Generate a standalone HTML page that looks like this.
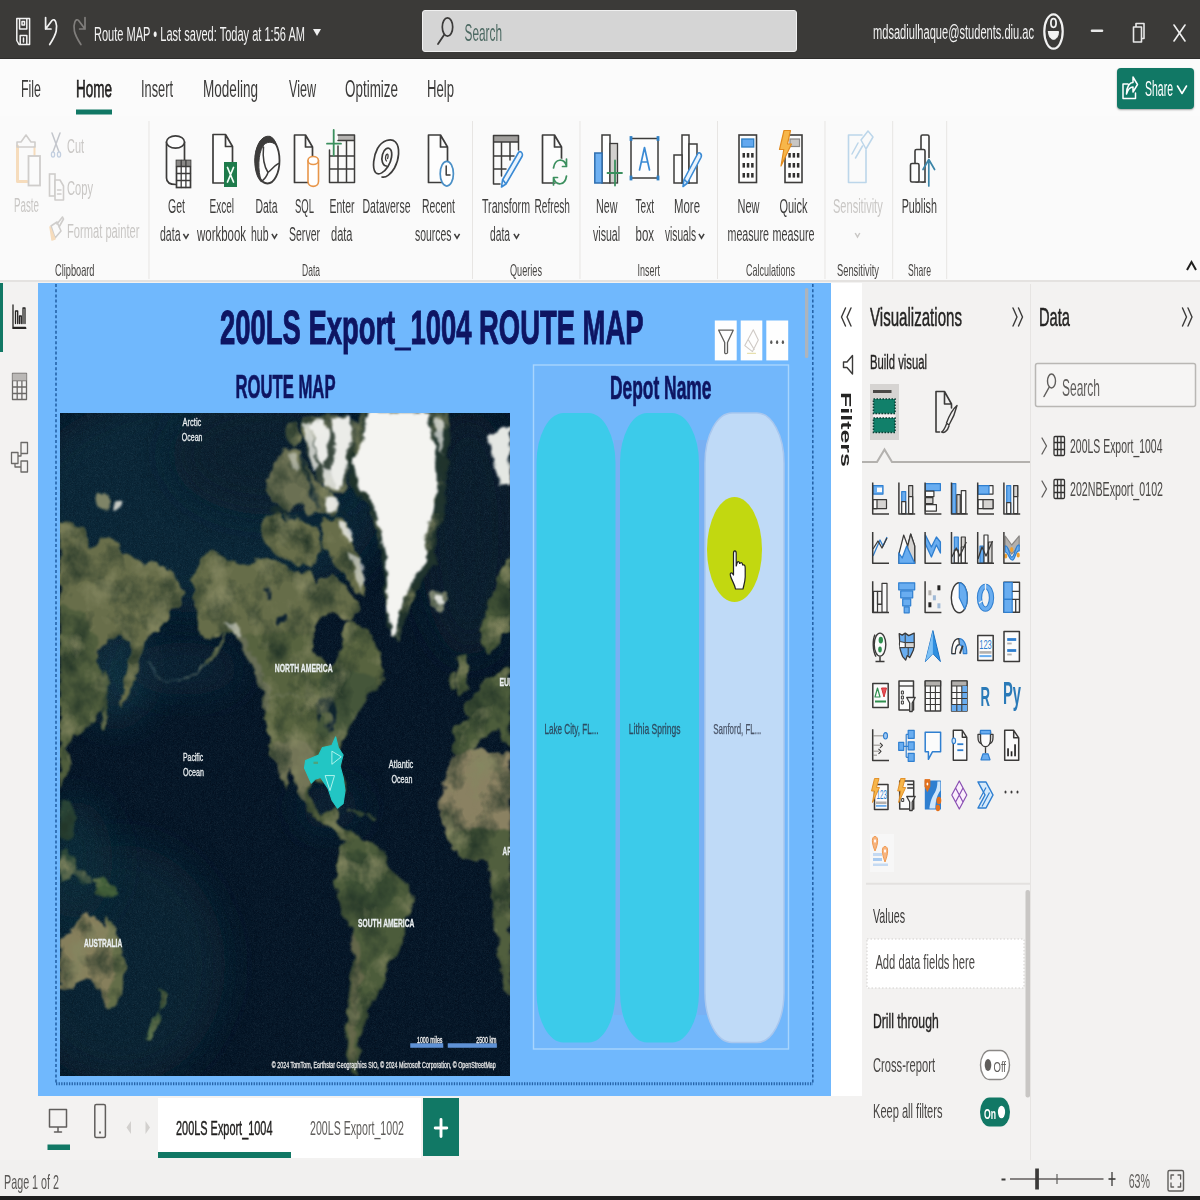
<!DOCTYPE html>
<html lang="en"><head><meta charset="utf-8"><title>Route MAP - Power BI Desktop</title>
<style>
html,body{margin:0;padding:0;}
body{width:1200px;height:1200px;overflow:hidden;position:relative;background:#f3f2f1;font-family:"Liberation Sans",sans-serif;}
.abs{position:absolute;}
#titlebar{left:0;top:0;width:1200px;height:59px;background:#3b3a38;border-bottom:1px solid #2e2d2c;box-sizing:border-box;}
#searchbox{left:422px;top:10px;width:373px;height:40px;background:#d5d5d5;border:1.5px solid #f0f0f0;border-radius:3px;box-sizing:content-box;}
#menurow{left:0;top:59px;width:1200px;height:57px;background:#fbfbfb;}
#ribbon{left:0;top:116px;width:1200px;height:164px;background:#fafafa;border-bottom:2.5px solid #e4e2e0;}
#share{left:1117px;top:67.5px;width:77px;height:41px;background:#117865;border-radius:4px;box-shadow:0 1px 2px rgba(0,0,0,.35);}
#rail{left:0;top:282.5px;width:38px;height:813px;background:#f3f2f1;}
#railsel{left:0;top:283px;width:2.6px;height:69px;background:#117865;}
#canvas{left:37.6px;top:282.5px;width:793.4px;height:813px;background:#70b8fd;}
#filters{left:831px;top:282.5px;width:31px;height:813px;background:#ffffff;}
#viz{left:862px;top:282.5px;width:168px;height:878px;background:#f3f2f1;}
#data{left:1031px;top:282.5px;width:169px;height:878px;background:#f3f2f1;}
#tabs{left:0;top:1095.5px;width:862px;height:65px;background:#f3f2f1;}
#tab1{left:157.5px;top:1097.5px;width:133.5px;height:60px;background:#ffffff;border-bottom:6.5px solid #117865;box-sizing:border-box;}
#tab2{left:291px;top:1097.5px;width:130px;height:60px;background:#ffffff;}
#addtab{left:422.5px;top:1098px;width:36.5px;height:58px;background:#117865;}
#status{left:0;top:1160px;width:1200px;height:36px;background:#f1f0ef;}
#bottomline{left:0;top:1196px;width:1200px;height:4px;background:#1f1f1f;}
#map{left:60px;top:413px;width:450px;height:663px;overflow:hidden;background:#06192a;}
svg text{font-family:"Liberation Sans",sans-serif;}
#overlay{left:0;top:0;}
</style></head>
<body>
<div id="titlebar" class="abs"></div>
<div id="searchbox" class="abs"></div>
<div id="menurow" class="abs"></div>
<div id="ribbon" class="abs"></div>
<div id="share" class="abs"></div>
<div id="rail" class="abs"></div>
<div id="railsel" class="abs"></div>
<div id="canvas" class="abs"></div>
<div id="map" class="abs">
<svg style="position:absolute;left:0;top:-3px" width="450" height="670" viewBox="0 0 1200 1787" preserveAspectRatio="none"><defs><filter id="b3" x="-2%" y="-2%" width="104%" height="104%" color-interpolation-filters="sRGB"><feTurbulence type="fractalNoise" baseFrequency="0.035 0.03" numOctaves="3" seed="11" result="w"/><feDisplacementMap in="SourceGraphic" in2="w" scale="26" xChannelSelector="R" yChannelSelector="G" result="dsp"/><feGaussianBlur in="dsp" stdDeviation="2.6" result="bl"/><feTurbulence type="fractalNoise" baseFrequency="0.013 0.011" numOctaves="4" seed="7" result="n"/><feColorMatrix in="n" type="matrix" values="0 0 0 0 0.13  0 0 0 0 0.20  0 0 0 0 0.15  2.2 0 0 0 -0.95" result="dk"/><feComposite in="dk" in2="bl" operator="in" result="dkl"/><feColorMatrix in="n" type="matrix" values="0 0 0 0 0.52  0 0 0 0 0.53  0 0 0 0 0.38  0 2.6 0 0 -1.35" result="lt"/><feComposite in="lt" in2="bl" operator="in" result="ltl"/><feMerge><feMergeNode in="bl"/><feMergeNode in="dkl"/><feMergeNode in="ltl"/></feMerge></filter><filter id="b2" x="-3%" y="-3%" width="106%" height="106%" color-interpolation-filters="sRGB"><feTurbulence type="fractalNoise" baseFrequency="0.04 0.035" numOctaves="3" seed="5" result="w"/><feDisplacementMap in="SourceGraphic" in2="w" scale="22" xChannelSelector="R" yChannelSelector="G" result="dsp"/><feGaussianBlur in="dsp" stdDeviation="2.5"/></filter><filter id="grain" x="0" y="0" width="100%" height="100%" color-interpolation-filters="sRGB"><feTurbulence type="fractalNoise" baseFrequency="0.7" numOctaves="2" seed="3"/><feColorMatrix type="matrix" values="0.3 0.3 0.3 0 -0.42  0.3 0.3 0.3 0 -0.35  0.3 0.3 0.3 0 -0.30  0 0 0 0 1"/></filter><filter id="b30" x="-40%" y="-40%" width="180%" height="180%"><feGaussianBlur stdDeviation="45"/></filter></defs><rect x="0" y="0" width="1200" height="1787" fill="#061729"/>
<ellipse cx="380" cy="240" rx="480" ry="300" fill="#112f3f" opacity="0.9" filter="url(#b30)"/>
<ellipse cx="560" cy="120" rx="260" ry="160" fill="#0a2232" opacity="0.9" filter="url(#b30)"/>
<ellipse cx="1090" cy="330" rx="130" ry="330" fill="#0a2233" opacity="0.9" filter="url(#b30)"/>
<ellipse cx="160" cy="1480" rx="280" ry="320" fill="#0e2b3a" opacity="0.85" filter="url(#b30)"/>
<ellipse cx="150" cy="700" rx="100" ry="130" fill="#163c4e" opacity="0.85" filter="url(#b30)"/>
<ellipse cx="330" cy="690" rx="150" ry="70" fill="#0e2b3c" opacity="0.8" filter="url(#b30)"/>
<ellipse cx="720" cy="1060" rx="80" ry="60" fill="#0e2b3c" opacity="0.9" filter="url(#b30)"/>
<ellipse cx="40" cy="1200" rx="100" ry="160" fill="#10333f" opacity="0.85" filter="url(#b30)"/>
<rect x="0" y="0" width="1200" height="1787" filter="url(#grain)" opacity="0.22"/>
<g filter="url(#b3)"><path d="M0 300 L30 300 L60 320 L70 360 L80 372 L110 345 L130 330 L150 350 L170 380 L200 395 L220 415 L250 405 L280 420 L300 440 L320 465 L330 490 L320 515 L300 530 L290 550 L280 570 L262 584 L235 598 L222 632 L206 700 L186 760 L170 792 L159 780 L174 720 L184 662 L186 612 L160 604 L130 612 L104 640 L98 670 L120 725 L116 790 L90 830 L55 860 L30 872 L16 900 L30 940 L16 975 L0 1010 Z" fill="#686e4a" /><path d="M0 520 L60 540 L100 610 L98 670 L120 725 L116 790 L90 830 L55 860 L30 872 L16 900 L30 940 L16 975 L0 1010 Z" fill="#4c5c3b" opacity="0.85"/><path d="M115 700 L128 698 L130 760 L122 850 L112 850 L118 770 Z" fill="#42533a" /><path d="M4 1040 L30 1050 L46 1085 L40 1130 L14 1150 L0 1140 Z" fill="#2a4638" /><path d="M98 222 L126 218 L136 244 L126 266 L104 262 Z" fill="#7f8467" /><path d="M360 430 L380 392 L400 375 L430 395 L470 410 L500 415 L530 398 L556 392 L600 418 L640 438 L665 430 L682 468 L702 452 L726 440 L760 470 L790 500 L800 540 L772 558 L744 546 L714 538 L690 552 L676 600 L672 628 L690 660 L722 680 L748 652 L752 604 L764 560 L800 578 L830 600 L850 650 L860 700 L856 732 L822 766 L800 800 L786 822 L766 860 L756 880 L750 900 L745 920 L750 950 L755 980 L760 1015 L755 1050 L745 1062 L735 1044 L726 1012 L704 994 L682 986 L670 996 L665 1026 L676 1060 L700 1076 L722 1070 L736 1062 L738 1086 L732 1102 L760 1120 L790 1130 L810 1150 L830 1170 L842 1200 L830 1206 L800 1176 L770 1152 L750 1140 L730 1122 L700 1102 L676 1082 L650 1052 L630 1002 L612 952 L604 1010 L590 980 L576 942 L560 900 L550 850 L545 800 L540 752 L520 700 L500 650 L466 602 L452 588 L432 596 L404 612 L376 600 L364 578 L370 550 L360 530 L350 500 L360 480 L350 452 Z" fill="#57633f" /><path d="M360 430 L380 392 L400 375 L430 395 L470 410 L500 415 L530 398 L556 392 L600 418 L640 438 L665 430 L682 468 L702 452 L726 440 L760 470 L790 500 L800 540 L772 558 L744 546 L714 538 L690 552 L676 600 L600 590 L520 600 L466 602 L452 588 L432 596 L404 612 L376 600 L364 578 L370 550 L360 530 L350 500 L360 480 L350 452 Z" fill="#686e4a" opacity="0.9"/><path d="M700 700 L760 690 L842 716 L852 740 L822 766 L800 800 L766 860 L745 900 L720 900 L684 860 L690 780 Z" fill="#42533a" opacity="0.85"/><path d="M562 890 L640 872 L682 902 L690 960 L664 1000 L650 1050 L630 1002 L612 952 L604 1000 L590 980 L576 942 Z" fill="#77775a" opacity="0.9"/><path d="M452 588 L466 602 L500 650 L520 700 L540 752 L545 800 L560 800 L556 740 L536 690 L512 640 L482 596 Z" fill="#6f7461" opacity="0.7"/><path d="M444 596 C424 650 360 726 300 726 C268 724 246 700 230 672" fill="none" stroke="#3a5560" stroke-width="5" stroke-linecap="round" opacity="0.75"/><path d="M444 596 C434 622 414 650 392 672" fill="none" stroke="#55634a" stroke-width="7" stroke-linecap="round"/><path d="M548 470 L562 466 L560 500 L548 510 Z" fill="#0a1f30" /><path d="M580 560 L602 548 L606 558 L584 580 Z" fill="#0a1f30" /><path d="M688 776 L706 762 L726 770 L732 800 L728 852 L716 858 L716 806 L700 800 L694 830 L686 820 Z" fill="#0a1f30" /><path d="M545 762 H690" stroke="#8a8f78" stroke-width="2.5" fill="none" opacity="0.7"/><path d="M545 190 L570 150 L600 100 L640 110 L660 150 L700 205 L742 250 L730 285 L690 270 L660 282 L640 250 L600 268 L562 240 Z" fill="#6b7053" /><path d="M540 282 L580 272 L600 300 L640 292 L690 322 L702 380 L664 420 L602 400 L562 372 L536 332 Z" fill="#686e4a" /><path d="M700 290 L752 290 L792 372 L812 452 L808 498 L790 484 L762 444 L722 400 L702 352 Z" fill="#686e4a" /><path d="M640 20 L700 12 L760 10 L800 40 L792 100 L770 150 L762 216 L720 222 L692 190 L672 140 L650 80 Z" fill="#3c4a40" /><path d="M604 40 L634 30 L640 80 L622 100 L606 80 Z" fill="#46543f" /><path d="M560 262 L700 300 M640 120 L690 260 M700 210 L780 300 M600 270 L610 300" stroke="#0c2436" stroke-width="11" fill="none" opacity="0.85"/><path d="M800 0 L1030 0 L1044 60 L1030 150 L1028 250 L1010 310 L1000 360 L1004 410 L972 452 L946 500 L924 540 L912 590 L900 618 L884 600 L870 552 L862 500 L864 450 L858 400 L848 350 L838 300 L826 262 L800 232 L776 205 L766 140 L790 80 Z" fill="#20342f" /><path d="M990 490 L1020 482 L1036 510 L1016 538 L994 524 Z" fill="#7e8672" /><path d="M1200 390 L1175 425 L1160 475 L1140 525 L1120 575 L1125 615 L1140 660 L1160 640 L1176 600 L1200 590 Z" fill="#4c5c3b" /><path d="M1058 660 L1080 648 L1088 700 L1084 750 L1066 766 L1056 730 L1062 700 Z" fill="#4c5c3b" /><path d="M1040 704 L1054 700 L1054 740 L1040 744 Z" fill="#4c5c3b" /><path d="M1200 690 L1150 710 L1110 750 L1080 790 L1075 810 L1090 825 L1070 840 L1050 840 L1045 900 L1060 920 L1100 910 L1120 880 L1150 860 L1172 850 L1180 880 L1200 900 Z" fill="#4c5c3b" /><path d="M1050 925 L1080 915 L1120 905 L1160 915 L1200 915 L1200 1560 L1185 1540 L1175 1500 L1170 1450 L1165 1400 L1155 1350 L1150 1300 L1150 1250 L1140 1205 L1110 1200 L1080 1195 L1060 1175 L1040 1150 L1025 1120 L1020 1080 L1015 1040 L1025 1000 L1035 960 Z" fill="#8a8162" /><path d="M1030 1130 L1100 1120 L1200 1120 L1200 1560 L1185 1540 L1175 1500 L1170 1450 L1165 1400 L1155 1350 L1150 1300 L1150 1250 L1140 1205 L1110 1200 L1080 1195 L1060 1175 L1040 1150 Z" fill="#4c5c3b" opacity="0.92"/><path d="M766 1066 L812 1078 M824 1086 L842 1090" stroke="#3f5138" stroke-width="7" stroke-linecap="round" fill="none"/><path d="M740 1172 L770 1146 L800 1140 L830 1150 L860 1176 L872 1204 L884 1230 L910 1255 L940 1285 L946 1310 L930 1350 L920 1400 L900 1440 L880 1470 L870 1500 L860 1540 L840 1570 L820 1600 L810 1640 L800 1680 L795 1720 L792 1762 L790 1776 L775 1760 L765 1720 L760 1670 L765 1620 L770 1570 L775 1520 L780 1470 L785 1420 L775 1380 L755 1340 L740 1300 L735 1250 L742 1205 Z" fill="#4c5c3b" /><path d="M760 1180 L800 1170 L850 1220 L900 1270 L880 1320 L820 1330 L770 1300 L750 1240 Z" fill="#3f5236" opacity="0.9"/><path d="M776 1390 L800 1420 L802 1520 L790 1640 L786 1740 L774 1740 L768 1660 L776 1560 L784 1480 Z" fill="#68694e" opacity="0.85"/><path d="M0 1410 L30 1390 L55 1355 L75 1340 L95 1350 L118 1384 L124 1350 L130 1345 L140 1380 L155 1415 L170 1450 L176 1480 L170 1520 L160 1560 L145 1590 L130 1596 L115 1570 L100 1540 L85 1520 L65 1515 L45 1530 L20 1540 L0 1545 Z" fill="#867f5c" /><path d="M124 1350 L130 1345 L140 1380 L155 1415 L170 1450 L176 1480 L170 1520 L160 1560 L145 1590 L130 1596 L128 1560 L146 1500 L140 1440 Z" fill="#5d6a44" opacity="0.85"/><path d="M85 1250 L110 1246 L146 1272 L150 1296 L126 1304 L100 1290 Z" fill="#43603a" /><path d="M262 1548 L284 1556 L280 1590 L264 1602 L270 1574 Z" fill="#4d6a46" /><path d="M262 1604 L272 1612 L258 1650 L238 1682 L228 1672 L246 1636 Z" fill="#4d6a46" /><path d="M0 1180 L24 1176 L44 1210 L30 1252 L0 1262 Z" fill="#2f4a3a" /><path d="M30 1222 L70 1232 L84 1262 L52 1262 Z" fill="#2f4a3a" opacity="0.7"/></g>
<g filter="url(#b2)"><path d="M142 244 L158 242 L160 264 L146 266 Z" fill="#c9ccc6" /><path d="M668 34 L702 24 L718 60 L712 120 L700 150 L684 110 Z" fill="#f4f4f1" opacity="0.95"/><path d="M724 20 L770 20 L780 70 L764 130 L756 200 L730 208 L722 160 L734 100 Z" fill="#f4f4f1" opacity="0.95"/><path d="M706 236 L738 230 L742 268 L716 278 Z" fill="#f4f4f1" opacity="0.9"/><path d="M650 36 L668 30 L676 90 L690 150 L676 160 L660 110 Z" fill="#f4f4f1" opacity="0.75"/><path d="M700 150 L724 160 L730 208 L706 204 Z" fill="#f4f4f1" opacity="0.8"/><path d="M610 120 L626 112 L640 150 L630 170 L616 150 Z" fill="#f4f4f1" opacity="0.45"/><path d="M440 570 L470 566 L486 600 L474 606 L456 590 Z" fill="#f4f4f1" opacity="0.5"/><path d="M742 296 L764 304 L786 352 L772 356 L752 334 Z" fill="#f4f4f1" opacity="0.8"/><path d="M766 380 L800 392 L812 452 L804 486 L790 440 Z" fill="#f4f4f1" opacity="0.6"/><path d="M820 6 L980 6 L1000 100 L1005 175 L1000 250 L982 300 L972 350 L980 400 L950 440 L930 480 L910 520 L900 565 L895 606 L887 600 L875 550 L870 500 L872 450 L870 400 L860 350 L850 300 L840 260 L820 222 L792 200 L780 140 L810 75 Z" fill="#f4f4f1" /><path d="M996 20 L1022 30 L1020 120 L1010 100 Z" fill="#f4f4f1" opacity="0.7"/><path d="M1145 72 L1170 50 L1200 40 L1200 205 L1172 200 L1152 132 Z" fill="#e4e7e3" /><path d="M1000 496 L1022 494 L1026 516 L1008 524 Z" fill="#f4f4f1" opacity="0.85"/></g>
<path d="M735 872 L742 900 L755 920 L747 950 L755 980 L760 1015 L755 1050 L740 1062 L725 1040 L715 1010 L705 995 L695 980 L680 985 L670 995 L652 955 L655 935 L690 920 L700 900 L725 895 Z" fill="#22c6c4" stroke="#22c6c4" stroke-width="3" stroke-linejoin="round"/>
<path d="M725 910 L750 925 L725 945 Z M707 975 L732 975 L720 1015 Z" fill="none" stroke="#c9fbf4" stroke-width="2.2"/>
<rect x="676" y="938" width="12" height="6" fill="#5a9a6a" opacity="0.8"/>
<text x="327" y="44" font-size="30" textLength="50" lengthAdjust="spacingAndGlyphs" fill="#e9eef0" font-weight="400" stroke="#e9eef0" stroke-width="0.8">Arctic</text>
<text x="325" y="84" font-size="30" textLength="55" lengthAdjust="spacingAndGlyphs" fill="#e9eef0" font-weight="400" stroke="#e9eef0" stroke-width="0.8">Ocean</text>
<text x="573" y="700" font-size="28" textLength="154" lengthAdjust="spacingAndGlyphs" fill="#e9eef0" font-weight="700" stroke="#e9eef0" stroke-width="0.8">NORTH AMERICA</text>
<text x="328" y="936" font-size="30" textLength="54" lengthAdjust="spacingAndGlyphs" fill="#e9eef0" font-weight="400" stroke="#e9eef0" stroke-width="0.8">Pacific</text>
<text x="328" y="977" font-size="30" textLength="56" lengthAdjust="spacingAndGlyphs" fill="#e9eef0" font-weight="400" stroke="#e9eef0" stroke-width="0.8">Ocean</text>
<text x="877" y="956" font-size="30" textLength="65" lengthAdjust="spacingAndGlyphs" fill="#e9eef0" font-weight="400" stroke="#e9eef0" stroke-width="0.8">Atlantic</text>
<text x="884" y="994" font-size="30" textLength="56" lengthAdjust="spacingAndGlyphs" fill="#e9eef0" font-weight="400" stroke="#e9eef0" stroke-width="0.8">Ocean</text>
<text x="795" y="1378" font-size="28" textLength="150" lengthAdjust="spacingAndGlyphs" fill="#e9eef0" font-weight="700" stroke="#e9eef0" stroke-width="0.8">SOUTH AMERICA</text>
<text x="64" y="1432" font-size="28" textLength="102" lengthAdjust="spacingAndGlyphs" fill="#e9eef0" font-weight="700" stroke="#e9eef0" stroke-width="0.8">AUSTRALIA</text>
<text x="1172" y="737" font-size="28" textLength="78" lengthAdjust="spacingAndGlyphs" fill="#e9eef0" font-weight="700" stroke="#e9eef0" stroke-width="0.8">EUROPE</text>
<text x="1180" y="1186" font-size="28" textLength="65" lengthAdjust="spacingAndGlyphs" fill="#e9eef0" font-weight="700" stroke="#e9eef0" stroke-width="0.8">AFRICA</text>
<rect x="934" y="1689" width="88" height="12" fill="#5f92d6"/><rect x="1034" y="1689" width="131" height="12" fill="#5f92d6"/>
<text x="952" y="1687" font-size="22" textLength="68" lengthAdjust="spacingAndGlyphs" fill="#f2f2f2" font-weight="400" stroke="#f2f2f2" stroke-width="0.8">1000 miles</text>
<text x="1110" y="1687" font-size="22" textLength="54" lengthAdjust="spacingAndGlyphs" fill="#f2f2f2" font-weight="400" stroke="#f2f2f2" stroke-width="0.8">2500 km</text>
<text x="565" y="1756" font-size="23" textLength="597" lengthAdjust="spacingAndGlyphs" fill="#e6e6e6" font-weight="400" stroke="#e6e6e6" stroke-width="0.8">© 2024 TomTom, Earthstar Geographics SIO, © 2024 Microsoft Corporation, © OpenStreetMap</text></svg>
</div>
<div id="filters" class="abs"></div>
<div id="viz" class="abs"></div>
<div id="data" class="abs"></div>
<div id="tabs" class="abs"></div>
<div id="tab1" class="abs"></div>
<div id="tab2" class="abs"></div>
<div id="addtab" class="abs"></div>
<div id="status" class="abs"></div>
<div id="bottomline" class="abs"></div>
<svg id="overlay" class="abs" width="1200" height="1200" viewBox="0 0 1200 1200">
<text x="94.0" y="41.0" font-size="20" textLength="211.0" lengthAdjust="spacingAndGlyphs" fill="#f3f3f3" font-weight="400" >Route MAP • Last saved: Today at 1:56 AM</text>
<path d="M313 29 L321 29 L317 36 Z" fill="#f0f0f0"/>
<text x="464.5" y="41.0" font-size="24" textLength="37.5" lengthAdjust="spacingAndGlyphs" fill="#4d6a63" font-weight="400" >Search</text>
<text x="873.0" y="39.0" font-size="20" textLength="161.0" lengthAdjust="spacingAndGlyphs" fill="#f3f3f3" font-weight="400" >mdsadiulhaque@students.diu.ac</text>
<text x="21.0" y="97.0" font-size="24.5" textLength="20.0" lengthAdjust="spacingAndGlyphs" fill="#3b3a39" font-weight="400" >File</text>
<text x="76.0" y="97.0" font-size="24.5" textLength="36.0" lengthAdjust="spacingAndGlyphs" fill="#201f1e" font-weight="400" stroke="#201f1e" stroke-width="0.75">Home</text>
<text x="141.0" y="97.0" font-size="24.5" textLength="32.0" lengthAdjust="spacingAndGlyphs" fill="#3b3a39" font-weight="400" >Insert</text>
<text x="203.0" y="97.0" font-size="24.5" textLength="55.0" lengthAdjust="spacingAndGlyphs" fill="#3b3a39" font-weight="400" >Modeling</text>
<text x="289.0" y="97.0" font-size="24.5" textLength="27.0" lengthAdjust="spacingAndGlyphs" fill="#3b3a39" font-weight="400" >View</text>
<text x="345.0" y="97.0" font-size="24.5" textLength="53.0" lengthAdjust="spacingAndGlyphs" fill="#3b3a39" font-weight="400" >Optimize</text>
<text x="427.0" y="97.0" font-size="24.5" textLength="27.0" lengthAdjust="spacingAndGlyphs" fill="#3b3a39" font-weight="400" >Help</text>
<rect x="76" y="109.5" width="36" height="5.0" fill="#117865" />
<text x="1145.0" y="96.0" font-size="21.5" textLength="28.0" lengthAdjust="spacingAndGlyphs" fill="#ffffff" font-weight="400" >Share</text>
<text x="14.0" y="212.0" font-size="19.5" textLength="25.0" lengthAdjust="spacingAndGlyphs" fill="#c9c7c5" font-weight="400" >Paste</text>
<text x="67.0" y="152.5" font-size="19.5" textLength="17.0" lengthAdjust="spacingAndGlyphs" fill="#c9c7c5" font-weight="400" >Cut</text>
<text x="67.0" y="195.0" font-size="19.5" textLength="26.0" lengthAdjust="spacingAndGlyphs" fill="#c9c7c5" font-weight="400" >Copy</text>
<text x="67.0" y="238.0" font-size="19.5" textLength="72.5" lengthAdjust="spacingAndGlyphs" fill="#c9c7c5" font-weight="400" >Format painter</text>
<text x="168.0" y="213.0" font-size="19.5" textLength="17.0" lengthAdjust="spacingAndGlyphs" fill="#3f3e3d" font-weight="400" >Get</text>
<text x="160.0" y="241.0" font-size="19.5" textLength="20.5" lengthAdjust="spacingAndGlyphs" fill="#3f3e3d" font-weight="400" >data</text>
<path d="M183.4 233.8 L186.0 238.2 L188.6 233.8" fill="none" stroke="#3f3e3d" stroke-width="1.5"/>
<text x="209.5" y="213.0" font-size="19.5" textLength="24.5" lengthAdjust="spacingAndGlyphs" fill="#3f3e3d" font-weight="400" >Excel</text>
<text x="197.0" y="241.0" font-size="19.5" textLength="49.0" lengthAdjust="spacingAndGlyphs" fill="#3f3e3d" font-weight="400" >workbook</text>
<text x="255.5" y="213.0" font-size="19.5" textLength="22.0" lengthAdjust="spacingAndGlyphs" fill="#3f3e3d" font-weight="400" >Data</text>
<text x="251.0" y="241.0" font-size="19.5" textLength="17.5" lengthAdjust="spacingAndGlyphs" fill="#3f3e3d" font-weight="400" >hub</text>
<path d="M271.9 233.8 L274.5 238.2 L277.1 233.8" fill="none" stroke="#3f3e3d" stroke-width="1.5"/>
<text x="295.0" y="213.0" font-size="19.5" textLength="19.0" lengthAdjust="spacingAndGlyphs" fill="#3f3e3d" font-weight="400" >SQL</text>
<text x="289.0" y="241.0" font-size="19.5" textLength="31.0" lengthAdjust="spacingAndGlyphs" fill="#3f3e3d" font-weight="400" >Server</text>
<text x="329.5" y="213.0" font-size="19.5" textLength="25.0" lengthAdjust="spacingAndGlyphs" fill="#3f3e3d" font-weight="400" >Enter</text>
<text x="331.0" y="241.0" font-size="19.5" textLength="21.5" lengthAdjust="spacingAndGlyphs" fill="#3f3e3d" font-weight="400" >data</text>
<text x="362.5" y="213.0" font-size="19.5" textLength="48.0" lengthAdjust="spacingAndGlyphs" fill="#3f3e3d" font-weight="400" >Dataverse</text>
<text x="422.0" y="213.0" font-size="19.5" textLength="33.0" lengthAdjust="spacingAndGlyphs" fill="#3f3e3d" font-weight="400" >Recent</text>
<text x="415.0" y="241.0" font-size="19.5" textLength="36.5" lengthAdjust="spacingAndGlyphs" fill="#3f3e3d" font-weight="400" >sources</text>
<path d="M454.4 233.8 L457.0 238.2 L459.6 233.8" fill="none" stroke="#3f3e3d" stroke-width="1.5"/>
<text x="482.0" y="213.0" font-size="19.5" textLength="48.0" lengthAdjust="spacingAndGlyphs" fill="#3f3e3d" font-weight="400" >Transform</text>
<text x="490.0" y="241.0" font-size="19.5" textLength="20.0" lengthAdjust="spacingAndGlyphs" fill="#3f3e3d" font-weight="400" >data</text>
<path d="M513.9 233.8 L516.5 238.2 L519.1 233.8" fill="none" stroke="#3f3e3d" stroke-width="1.5"/>
<text x="534.5" y="213.0" font-size="19.5" textLength="35.5" lengthAdjust="spacingAndGlyphs" fill="#3f3e3d" font-weight="400" >Refresh</text>
<text x="596.0" y="213.0" font-size="19.5" textLength="21.5" lengthAdjust="spacingAndGlyphs" fill="#3f3e3d" font-weight="400" >New</text>
<text x="593.0" y="241.0" font-size="19.5" textLength="27.0" lengthAdjust="spacingAndGlyphs" fill="#3f3e3d" font-weight="400" >visual</text>
<text x="635.5" y="213.0" font-size="19.5" textLength="18.5" lengthAdjust="spacingAndGlyphs" fill="#3f3e3d" font-weight="400" >Text</text>
<text x="635.5" y="241.0" font-size="19.5" textLength="18.5" lengthAdjust="spacingAndGlyphs" fill="#3f3e3d" font-weight="400" >box</text>
<text x="674.0" y="213.0" font-size="19.5" textLength="26.0" lengthAdjust="spacingAndGlyphs" fill="#3f3e3d" font-weight="400" >More</text>
<text x="665.0" y="241.0" font-size="19.5" textLength="31.0" lengthAdjust="spacingAndGlyphs" fill="#3f3e3d" font-weight="400" >visuals</text>
<path d="M698.9 233.8 L701.5 238.2 L704.1 233.8" fill="none" stroke="#3f3e3d" stroke-width="1.5"/>
<text x="737.5" y="213.0" font-size="19.5" textLength="22.0" lengthAdjust="spacingAndGlyphs" fill="#3f3e3d" font-weight="400" >New</text>
<text x="727.5" y="241.0" font-size="19.5" textLength="41.5" lengthAdjust="spacingAndGlyphs" fill="#3f3e3d" font-weight="400" >measure</text>
<text x="779.5" y="213.0" font-size="19.5" textLength="28.0" lengthAdjust="spacingAndGlyphs" fill="#3f3e3d" font-weight="400" >Quick</text>
<text x="772.5" y="241.0" font-size="19.5" textLength="42.0" lengthAdjust="spacingAndGlyphs" fill="#3f3e3d" font-weight="400" >measure</text>
<text x="833.0" y="213.0" font-size="19.5" textLength="49.7" lengthAdjust="spacingAndGlyphs" fill="#c9c7c5" font-weight="400" >Sensitivity</text>
<path d="M855.2 233.0 L857.5 237.0 L859.8 233.0" fill="none" stroke="#c9c7c5" stroke-width="1.5"/>
<text x="901.7" y="213.0" font-size="19.5" textLength="35.3" lengthAdjust="spacingAndGlyphs" fill="#3f3e3d" font-weight="400" >Publish</text>
<text x="55.0" y="276.0" font-size="16.5" textLength="39.5" lengthAdjust="spacingAndGlyphs" fill="#484644" font-weight="400" >Clipboard</text>
<text x="302.0" y="276.0" font-size="16.5" textLength="18.0" lengthAdjust="spacingAndGlyphs" fill="#484644" font-weight="400" >Data</text>
<text x="510.0" y="276.0" font-size="16.5" textLength="32.0" lengthAdjust="spacingAndGlyphs" fill="#484644" font-weight="400" >Queries</text>
<text x="637.5" y="276.0" font-size="16.5" textLength="22.5" lengthAdjust="spacingAndGlyphs" fill="#484644" font-weight="400" >Insert</text>
<text x="746.0" y="276.0" font-size="16.5" textLength="49.0" lengthAdjust="spacingAndGlyphs" fill="#484644" font-weight="400" >Calculations</text>
<text x="837.0" y="276.0" font-size="16.5" textLength="42.0" lengthAdjust="spacingAndGlyphs" fill="#484644" font-weight="400" >Sensitivity</text>
<text x="908.0" y="276.0" font-size="16.5" textLength="23.0" lengthAdjust="spacingAndGlyphs" fill="#484644" font-weight="400" >Share</text>
<line x1="149" y1="121" x2="149" y2="279" stroke="#e7e5e3" stroke-width="1" />
<line x1="472.5" y1="121" x2="472.5" y2="279" stroke="#e7e5e3" stroke-width="1" />
<line x1="580" y1="121" x2="580" y2="279" stroke="#e7e5e3" stroke-width="1" />
<line x1="717.5" y1="121" x2="717.5" y2="279" stroke="#e7e5e3" stroke-width="1" />
<line x1="825" y1="121" x2="825" y2="279" stroke="#e7e5e3" stroke-width="1" />
<line x1="892.7" y1="121" x2="892.7" y2="279" stroke="#e7e5e3" stroke-width="1" />
<line x1="946.7" y1="121" x2="946.7" y2="279" stroke="#e7e5e3" stroke-width="1" />
<path d="M1187 270 L1191.5 262 L1196 270" fill="none" stroke="#201f1e" stroke-width="2"/>
<text x="220.0" y="343.5" font-size="49" textLength="423.5" lengthAdjust="spacingAndGlyphs" fill="#0e1562" font-weight="700" stroke="#0e1562" stroke-width="1.1">200LS Export_1004 ROUTE MAP</text>
<text x="235.5" y="398.3" font-size="32.5" textLength="100.0" lengthAdjust="spacingAndGlyphs" fill="#0e1562" font-weight="700" stroke="#0e1562" stroke-width="0.7">ROUTE MAP</text>
<line x1="56" y1="284" x2="56" y2="1084" stroke="#2563a8" stroke-width="1.6" stroke-dasharray="3 2.2"/>
<line x1="812.8" y1="284" x2="812.8" y2="1084" stroke="#2563a8" stroke-width="1.6" stroke-dasharray="3 2.2"/>
<line x1="56" y1="1083.8" x2="813" y2="1083.8" stroke="#2563a8" stroke-width="3" stroke-dasharray="1.3 1.3"/>
<rect x="533.5" y="365" width="255" height="684" fill="#72b7fb" stroke="#a8d5fd" stroke-width="1.4"/>
<text x="610.0" y="399.3" font-size="32.5" textLength="101.5" lengthAdjust="spacingAndGlyphs" fill="#0e1562" font-weight="700" stroke="#0e1562" stroke-width="0.7">Depot Name</text>
<rect x="614" y="440" width="8" height="575" fill="#79b0f3"/><rect x="697.5" y="440" width="9" height="575" fill="#79b0f3"/>
<rect x="536.5" y="413" width="79.0" height="629.5" rx="27" ry="50" fill="#3ccbea"/>
<rect x="620" y="413" width="79" height="629.5" rx="27" ry="50" fill="#3ccbea"/>
<rect x="705" y="413" width="79" height="629.5" rx="27" ry="50" fill="#bfdaf7" stroke="#a9c7ee" stroke-width="1.5"/>
<ellipse cx="734.5" cy="549.5" rx="27.5" ry="52.5" fill="#c2d810"/>
<text x="544.5" y="734.0" font-size="14.5" textLength="54.0" lengthAdjust="spacingAndGlyphs" fill="#2d4d63" font-weight="400" stroke="#2d4d63" stroke-width="0.3">Lake City, FL...</text>
<text x="628.8" y="734.0" font-size="14.5" textLength="51.7" lengthAdjust="spacingAndGlyphs" fill="#2d4d63" font-weight="400" stroke="#2d4d63" stroke-width="0.3">Lithia Springs</text>
<text x="713.3" y="734.0" font-size="14.5" textLength="48.0" lengthAdjust="spacingAndGlyphs" fill="#4a5568" font-weight="400" stroke="#4a5568" stroke-width="0.25">Sanford, FL...</text>
<rect x="714.8" y="320.5" width="21.90000000000009" height="39.89999999999998" fill="#fefefe" />
<rect x="740.7" y="320.5" width="21.59999999999991" height="39.89999999999998" fill="#fefefe" />
<rect x="766.3" y="320.5" width="21.90000000000009" height="39.89999999999998" fill="#fefefe" />
<rect x="805" y="288" width="3.2999999999999545" height="70" fill="#aeb4bb" rx="1.5"/>
<text x="870.0" y="326.0" font-size="26" textLength="92.0" lengthAdjust="spacingAndGlyphs" fill="#252423" font-weight="400" stroke="#252423" stroke-width="0.5">Visualizations</text>
<text x="1039.0" y="326.0" font-size="26" textLength="31.0" lengthAdjust="spacingAndGlyphs" fill="#252423" font-weight="400" stroke="#252423" stroke-width="0.5">Data</text>
<text x="870.0" y="369.0" font-size="19.5" textLength="57.0" lengthAdjust="spacingAndGlyphs" fill="#252423" font-weight="400" stroke="#252423" stroke-width="0.35">Build visual</text>
<text x="0.0" y="0.0" font-size="15.5" textLength="75.0" lengthAdjust="spacingAndGlyphs" fill="#252423" font-weight="700" transform="translate(840.8 392) rotate(90)">Filters</text>
<line x1="1030.5" y1="284" x2="1030.5" y2="1160" stroke="#e6e4e2" stroke-width="1" />
<path d="M862 462 H877 L884.5 449.5 L892 462 H1030" fill="none" stroke="#b3b1ae" stroke-width="2.1"/>
<rect x="1035.5" y="363.5" width="160" height="43" fill="#f6f5f4" stroke="#b9b7b4" stroke-width="1.5" rx="2"/>
<text x="1062.0" y="395.5" font-size="24" textLength="38.0" lengthAdjust="spacingAndGlyphs" fill="#605e5c" font-weight="400" >Search</text>
<text x="1070.0" y="453.0" font-size="19.5" textLength="92.5" lengthAdjust="spacingAndGlyphs" fill="#4a4846" font-weight="400" >200LS Export_1004</text>
<text x="1070.0" y="496.0" font-size="19.5" textLength="93.0" lengthAdjust="spacingAndGlyphs" fill="#4a4846" font-weight="400" >202NBExport_0102</text>
<line x1="866" y1="883.7" x2="1030" y2="883.7" stroke="#e3e1df" stroke-width="2" />
<text x="873.0" y="922.7" font-size="21" textLength="32.0" lengthAdjust="spacingAndGlyphs" fill="#3b3a39" font-weight="400" >Values</text>
<rect x="867" y="939" width="157" height="49" fill="#ffffff" stroke="#d2d0ce" stroke-width="1" stroke-dasharray="1.5 2"/>
<text x="875.4" y="969.0" font-size="19.5" textLength="99.6" lengthAdjust="spacingAndGlyphs" fill="#484644" font-weight="400" >Add data fields here</text>
<text x="873.0" y="1027.8" font-size="20.5" textLength="65.7" lengthAdjust="spacingAndGlyphs" fill="#252423" font-weight="400" stroke="#252423" stroke-width="0.4">Drill through</text>
<text x="873.0" y="1071.5" font-size="20.5" textLength="62.0" lengthAdjust="spacingAndGlyphs" fill="#484644" font-weight="400" >Cross-report</text>
<text x="873.0" y="1118.0" font-size="20.5" textLength="69.5" lengthAdjust="spacingAndGlyphs" fill="#484644" font-weight="400" >Keep all filters</text>
<rect x="980.5" y="1050.5" width="29" height="29" rx="9" ry="14.5" fill="#ffffff" stroke="#8a8886" stroke-width="1.4"/>
<ellipse cx="988" cy="1065" rx="3.3" ry="6" fill="#605e5c"/>
<text x="993.5" y="1072.0" font-size="15" textLength="12.5" lengthAdjust="spacingAndGlyphs" fill="#605e5c" font-weight="400" >Off</text>
<rect x="980" y="1097.5" width="30" height="29" rx="9.5" ry="14.5" fill="#117865"/>
<ellipse cx="1001.5" cy="1112" rx="3.6" ry="6.3" fill="#ffffff"/>
<text x="984.0" y="1118.5" font-size="15.5" textLength="12.0" lengthAdjust="spacingAndGlyphs" fill="#ffffff" font-weight="700" >On</text>
<rect x="1025.5" y="890" width="4.5" height="207.5" fill="#c8c6c4" rx="2"/>
<text x="176.0" y="1135.0" font-size="19.5" textLength="96.5" lengthAdjust="spacingAndGlyphs" fill="#201f1e" font-weight="400" stroke="#201f1e" stroke-width="0.45">200LS Export_1004</text>
<text x="310.0" y="1135.0" font-size="19.5" textLength="94.0" lengthAdjust="spacingAndGlyphs" fill="#605e5c" font-weight="400" >200LS Export_1002</text>
<text x="4.0" y="1189.0" font-size="21" textLength="55.0" lengthAdjust="spacingAndGlyphs" fill="#5a5856" font-weight="400" >Page 1 of 2</text>
<text x="1128.7" y="1188.0" font-size="20" textLength="21.3" lengthAdjust="spacingAndGlyphs" fill="#605e5c" font-weight="400" >63%</text>
<line x1="1010" y1="1179" x2="1103.5" y2="1179" stroke="#605e5c" stroke-width="1.4" />
<rect x="1035.2" y="1168.5" width="3.7000000000000455" height="21.0" fill="#3b3a39" />
<line x1="1057" y1="1174" x2="1057" y2="1184" stroke="#605e5c" stroke-width="1.2" />
<line x1="1001.5" y1="1179.5" x2="1005.5" y2="1179.5" stroke="#3b3a39" stroke-width="2" />
<line x1="1108.5" y1="1179" x2="1115.5" y2="1179" stroke="#3b3a39" stroke-width="1.6" />
<line x1="1112" y1="1172" x2="1112" y2="1186" stroke="#3b3a39" stroke-width="1.3" />
<path d="M16.8 18.5 H29.6 V44.5 H19 L16.8 40.5 Z M19.6 18.5 V29 H26.8 V18.5 M20.2 44.5 V35.5 H26.8 V44.5 M22 21.5 H24.5 V25 H22 Z M23.5 38 V42" fill="none" stroke="#f2f2f2" stroke-width="1.5" stroke-linejoin="round" stroke-linecap="round" />
<path d="M45.6 17.5 V29 H51 M45.6 29 L52 20.5 C55 17.5 57.6 24 56.2 31 C55.2 36 52 41 49.7 44.5" fill="none" stroke="#f2f2f2" stroke-width="1.7" stroke-linejoin="round" stroke-linecap="round" />
<path d="M85 17.5 V29 H79.6 M85 29 L78.6 20.5 C75.6 17.5 73 24 74.4 31 C75.4 36 78.6 41 80.9 44.5" fill="none" stroke="#807e7c" stroke-width="1.7" stroke-linejoin="round" stroke-linecap="round" />
<ellipse cx="447.5" cy="27" rx="5.2" ry="9.2" fill="none" stroke="#3b3a39" stroke-width="1.7" />
<path d="M444 35 L438 44" fill="none" stroke="#3b3a39" stroke-width="1.8" stroke-linejoin="round" stroke-linecap="round" />
<ellipse cx="1053.5" cy="31.5" rx="9.2" ry="17.2" fill="#3b3a38" stroke="#f2f2f2" stroke-width="2.2" />
<ellipse cx="1053.5" cy="23" rx="2.6" ry="4.3" fill="#3b3a38" stroke="#f2f2f2" stroke-width="1.8" />
<path d="M1048.5 31.5 H1058.5 C1058.5 42 1048.5 42 1048.5 31.5 Z" fill="#f2f2f2" stroke="#f2f2f2" stroke-width="1" stroke-linejoin="round" stroke-linecap="round" />
<path d="M1092 30.7 H1102" fill="none" stroke="#e8e8e8" stroke-width="2.6" stroke-linejoin="round" stroke-linecap="round" />
<path d="M1133.5 27 H1141.5 V42 H1133.5 Z M1136 27 V23.5 H1144 V38.5 H1141.5" fill="none" stroke="#e8e8e8" stroke-width="1.6" stroke-linejoin="round" stroke-linecap="round" />
<path d="M1174 25 L1185 41 M1185 25 L1174 41" fill="none" stroke="#f0f0f0" stroke-width="1.6" stroke-linejoin="round" stroke-linecap="round" />
<path d="M1128 84 H1123 V98.5 H1135.5 V93 M1126.5 94 C1126.5 86 1130 82.5 1133 82.5 V77 L1137.5 84.5 L1133 92 V87 C1130.5 87 1128 89 1126.5 94 Z" fill="none" stroke="#ffffff" stroke-width="1.5" stroke-linejoin="round" stroke-linecap="round" />
<path d="M1177.5 86 L1182 93.5 L1186.5 86" fill="none" stroke="#ffffff" stroke-width="1.6" stroke-linejoin="round" stroke-linecap="round" />
<path d="M17.5 146 V181.5 H27" fill="none" stroke="#f6dcbc" stroke-width="3" stroke-linejoin="round" stroke-linecap="round" />
<path d="M34.5 147 V155" fill="none" stroke="#f6dcbc" stroke-width="2" stroke-linejoin="round" stroke-linecap="round" />
<path d="M17 146 V142 H21 L26 135 L31 142 H35 V147 H17" fill="none" stroke="#cfcdcb" stroke-width="1.6" stroke-linejoin="round" stroke-linecap="round" />
<rect x="28.5" y="156.0" width="11.5" height="29.5" fill="#fbfbfb" stroke="#cfcdcb" stroke-width="1.8" />
<path d="M52 133 L59 152 M60 133 L53 152" fill="none" stroke="#c3c6cc" stroke-width="1.5" stroke-linejoin="round" stroke-linecap="round" />
<ellipse cx="53" cy="154.5" rx="1.6" ry="2.6" fill="none" stroke="#c3cfe0" stroke-width="1.3" />
<ellipse cx="59" cy="154.5" rx="1.6" ry="2.6" fill="none" stroke="#c3cfe0" stroke-width="1.3" />
<rect x="49.5" y="174.0" width="5.5" height="22.0" fill="none" stroke="#cfcdcb" stroke-width="1.6" />
<path d="M55 180 H60 L63.5 186 V200 H55 Z M57.5 190 H61 M57.5 194 H61" fill="#fbfbfb" stroke="#cfcdcb" stroke-width="1.6" stroke-linejoin="round" stroke-linecap="round" />
<path d="M57 224 L62.5 217 L63.5 219 L59 227 M51 226 L57 222 L61 231 L55 238 Z" fill="none" stroke="#cfcdcb" stroke-width="1.6" stroke-linejoin="round" stroke-linecap="round" />
<path d="M50 227 L55 239 L52 240 Z" fill="#f6dcbc" stroke="#f6dcbc" stroke-width="1.5" stroke-linejoin="round" stroke-linecap="round" />
<path d="M166.5 142 V178 C166.5 182 170 184.5 176 184.5 M184.5 142 V160" fill="#fdfdfd" stroke="#3d3c3b" stroke-width="1.7" stroke-linejoin="round" stroke-linecap="round" />
<ellipse cx="175.5" cy="142" rx="9" ry="6.2" fill="#fdfdfd" stroke="#3d3c3b" stroke-width="1.7" />
<rect x="176.5" y="160.5" width="14.0" height="27.0" fill="#ffffff" stroke="#3d3c3b" stroke-width="1.7" />
<rect x="176.5" y="160.5" width="14" height="6" fill="#8a8886"/>
<path d="M181.2 160.5 V187.5 M185.9 160.5 V187.5 M176.5 166.5 H190.5 M176.5 173.5 H190.5 M176.5 180.5 H190.5" fill="none" stroke="#3d3c3b" stroke-width="1.3" stroke-linejoin="round" stroke-linecap="round" />
<path d="M213 134.5 H225.5 L232.5 146.5 V183 H213 Z M225.5 134.5 V146.5 H232.5" fill="#fdfdfd" stroke="#3d3c3b" stroke-width="1.7" stroke-linejoin="round" stroke-linecap="round" />
<rect x="224" y="162" width="13" height="25" fill="#1e7b4b"/>
<path d="M227.5 167.5 L233.5 182 M233.5 167.5 L227.5 182" fill="none" stroke="#f4fff8" stroke-width="1.7" stroke-linejoin="round" stroke-linecap="round" />
<ellipse cx="267.5" cy="160.5" rx="12" ry="23" fill="#fdfdfd" stroke="#3d3c3b" stroke-width="1.8" />
<path d="M270 136.5 C262 134 255 146 254.8 160 C254.8 170 257 178 261.5 182 C257.5 170 258 154 263 146 C266 141.5 272 141 276 145 C275 140 273 137.5 270 136.5 Z" fill="#3d3c3b" stroke="#3d3c3b" stroke-width="1" stroke-linejoin="round" stroke-linecap="round" />
<path d="M263.5 147 C262.5 158 264.5 167 268 172.5 C272.5 169 276 163.5 279.3 163.5 M261.5 181.5 C264.5 179 267 176 268 172.5" fill="none" stroke="#3d3c3b" stroke-width="1.5" stroke-linejoin="round" stroke-linecap="round" />
<path d="M294.5 135 H305.5 L312.5 147 V182.5 H294.5 Z M305.5 135 V147 H312.5" fill="#fdfdfd" stroke="#3d3c3b" stroke-width="1.7" stroke-linejoin="round" stroke-linecap="round" />
<path d="M308 160.5 V181.5 C308 188 318.5 188 318.5 181.5 V160.5" fill="#ffffff" stroke="#e8964a" stroke-width="1.6" stroke-linejoin="round" stroke-linecap="round" />
<ellipse cx="313.2" cy="160.5" rx="5.2" ry="4" fill="#ffffff" stroke="#e8964a" stroke-width="1.6" />
<rect x="338" y="135" width="16.5" height="5.5" fill="#b5b3b1"/>
<path d="M338 135 H354.5 V182.5 H329.5 V150 M338 146 V182.5 M346.5 140.5 V182.5 M329.5 156 H354.5 M329.5 169 H354.5 M338 140.5 H354.5" fill="none" stroke="#3d3c3b" stroke-width="1.5" stroke-linejoin="round" stroke-linecap="round" />
<path d="M327 143.7 H341 M333.7 130 V155.5" fill="none" stroke="#3b8f5e" stroke-width="1.8" stroke-linejoin="round" stroke-linecap="round" />
<path d="M386.5 166 C382.5 166 381 160 382.5 154.5 C384 149 388 146.5 390.5 149.5 C393 153 391.5 161 388 166.5 C384.5 172 379 176 375.5 172.5 C372 168 373.5 156 377.5 148.5 C382 140.5 391 137.5 395.5 142 C400.5 147.5 399 160 394.5 168 C391 174 386 178 382 177" fill="none" stroke="#3d3c3b" stroke-width="1.7" stroke-linejoin="round" stroke-linecap="round" />
<path d="M386.5 161 C385 160 385.3 156 386.5 154.5 C388 153 388.6 156 387.6 158.5" fill="none" stroke="#3d3c3b" stroke-width="1.3" stroke-linejoin="round" stroke-linecap="round" />
<path d="M428.5 135 H440.5 L447.5 147 V182.5 H428.5 Z M440.5 135 V147 H447.5" fill="#fdfdfd" stroke="#3d3c3b" stroke-width="1.7" stroke-linejoin="round" stroke-linecap="round" />
<ellipse cx="446.8" cy="173.7" rx="6.6" ry="12.4" fill="#ffffff" stroke="#4a8fc6" stroke-width="1.7" />
<path d="M446.2 166 V175 H450" fill="none" stroke="#3d3c3b" stroke-width="1.5" stroke-linejoin="round" stroke-linecap="round" />
<rect x="493.5" y="135.5" width="25" height="6.5" fill="#a19f9d"/>
<path d="M493.5 135.5 H518.5 V150 M493.5 135.5 V184 H500 M501.5 142 V176 M510 142 V160 M493.5 142 H518.5 M493.5 156 H514 M493.5 169 H506" fill="none" stroke="#3d3c3b" stroke-width="1.5" stroke-linejoin="round" stroke-linecap="round" />
<path d="M518.5 152.5 C520 150 523.5 153 522 156.5 L506 184 L501.5 187 L502.5 180 Z M503 180 L506 184" fill="#eaf4fd" stroke="#3a8ad4" stroke-width="1.6" stroke-linejoin="round" stroke-linecap="round" />
<path d="M542.5 135 H554.5 L561.5 147 V183 H542.5 Z M554.5 135 V147 H561.5" fill="#fdfdfd" stroke="#3d3c3b" stroke-width="1.7" stroke-linejoin="round" stroke-linecap="round" />
<ellipse cx="560" cy="172" rx="7" ry="12" fill="#fafafa" stroke="#fafafa" stroke-width="3" />
<path d="M553.5 168 C555 158 564 158 566.5 166 M566.5 159 V166.5 H562.5 M566.5 176 C565 186 556 186 553.5 178 M553.5 185 V177.5 H557.5" fill="none" stroke="#3b8f5e" stroke-width="1.7" stroke-linejoin="round" stroke-linecap="round" />
<rect x="602.0" y="135.0" width="8.0" height="48.0" fill="#ffffff" stroke="#3d3c3b" stroke-width="1.5" />
<rect x="610.0" y="143.5" width="7.5" height="39.5" fill="#d2d0ce" stroke="#3d3c3b" stroke-width="1.3" />
<rect x="594.8" y="153.0" width="7.2" height="30.0" fill="#6fb1f2" stroke="#2f6fb0" stroke-width="1.5" />
<path d="M607.5 173 H622 M615 160.5 V185.5" fill="none" stroke="#3b8f5e" stroke-width="1.8" stroke-linejoin="round" stroke-linecap="round" />
<rect x="631.0" y="138.5" width="27.0" height="39.5" fill="#fdfdfd" stroke="#3d3c3b" stroke-width="1.5" />
<rect x="629.6" y="136.1" width="2.8" height="4.8" fill="#2f7fc4"/>
<rect x="656.6" y="136.1" width="2.8" height="4.8" fill="#2f7fc4"/>
<rect x="629.6" y="175.6" width="2.8" height="4.8" fill="#2f7fc4"/>
<rect x="656.6" y="175.6" width="2.8" height="4.8" fill="#2f7fc4"/>
<path d="M639.5 170 L644.5 147.5 L649.5 170 M641.3 162 H647.7" fill="none" stroke="#3a8ad4" stroke-width="1.7" stroke-linejoin="round" stroke-linecap="round" />
<rect x="682.0" y="135.0" width="7.0" height="48.0" fill="#fdfdfd" stroke="#3d3c3b" stroke-width="1.5" />
<rect x="674.0" y="155.0" width="8.0" height="28.0" fill="#fdfdfd" stroke="#3d3c3b" stroke-width="1.5" />
<rect x="689.0" y="144.0" width="8.0" height="39.0" fill="#fdfdfd" stroke="#3d3c3b" stroke-width="1.5" />
<path d="M697.5 154 C699 151 702.5 154 701 157.5 L687.5 183 L683 186.5 L684 179.5 Z M684.5 179.5 L687.5 183" fill="#eaf4fd" stroke="#3a8ad4" stroke-width="1.6" stroke-linejoin="round" stroke-linecap="round" />
<rect x="739.0" y="135.0" width="17.5" height="47.5" fill="#fdfdfd" stroke="#3d3c3b" stroke-width="1.6" />
<rect x="741.8" y="139.0" width="11.9" height="8.0" fill="#62a8ef" stroke="#2f7fc4" stroke-width="1.3" />
<rect x="742.5" y="153" width="2.5" height="4.6" fill="#323130"/>
<rect x="742.5" y="163" width="2.5" height="4.6" fill="#323130"/>
<rect x="742.5" y="173" width="2.5" height="4.6" fill="#323130"/>
<rect x="746.8" y="153" width="2.5" height="4.6" fill="#323130"/>
<rect x="746.8" y="163" width="2.5" height="4.6" fill="#323130"/>
<rect x="746.8" y="173" width="2.5" height="4.6" fill="#323130"/>
<rect x="751.1" y="153" width="2.5" height="4.6" fill="#323130"/>
<rect x="751.1" y="163" width="2.5" height="4.6" fill="#323130"/>
<rect x="751.1" y="173" width="2.5" height="4.6" fill="#323130"/>
<rect x="785.0" y="135.0" width="17.0" height="47.5" fill="#fdfdfd" stroke="#3d3c3b" stroke-width="1.6" />
<rect x="790.0" y="139.0" width="9.5" height="7.5" fill="#c8c6c4" stroke="#8a8886" stroke-width="1.2" />
<rect x="788.3" y="153" width="2.5" height="4.6" fill="#323130"/>
<rect x="788.3" y="163" width="2.5" height="4.6" fill="#323130"/>
<rect x="788.3" y="173" width="2.5" height="4.6" fill="#323130"/>
<rect x="792.6" y="153" width="2.5" height="4.6" fill="#323130"/>
<rect x="792.6" y="163" width="2.5" height="4.6" fill="#323130"/>
<rect x="792.6" y="173" width="2.5" height="4.6" fill="#323130"/>
<rect x="796.9" y="153" width="2.5" height="4.6" fill="#323130"/>
<rect x="796.9" y="163" width="2.5" height="4.6" fill="#323130"/>
<rect x="796.9" y="173" width="2.5" height="4.6" fill="#323130"/>
<path d="M784 130.5 H790.5 L787.5 144 H791.5 L781 166 L783.8 149.5 H779.5 Z" fill="#f7b64a" stroke="#e28a1c" stroke-width="1.2" stroke-linejoin="round" stroke-linecap="round" />
<path d="M848.5 135 H862 M866 150 V182.5 H848.5 V135" fill="none" stroke="#bcd6ea" stroke-width="1.6" stroke-linejoin="round" stroke-linecap="round" />
<path d="M861 140 L868 131 L873 137 L866 149 Z M855.5 158 L862.5 146 M852 154 L858 143" fill="none" stroke="#bcd6ea" stroke-width="1.5" stroke-linejoin="round" stroke-linecap="round" />
<rect x="921.0" y="135.0" width="8.0" height="47.0" fill="#fdfdfd" stroke="#3d3c3b" stroke-width="1.6" rx="1.5"/>
<rect x="915.0" y="149.5" width="10.0" height="32.5" fill="#fdfdfd" stroke="#3d3c3b" stroke-width="1.6" rx="1.5"/>
<rect x="910.5" y="163.5" width="8.5" height="18.5" fill="#fdfdfd" stroke="#3d3c3b" stroke-width="1.6" rx="1.5"/>
<rect x="926" y="158" width="6" height="28" fill="#fafafa"/>
<path d="M928.8 186 V160 M923 169.5 L928.8 159.5 L934.6 169.5" fill="none" stroke="#3c85a8" stroke-width="1.7" stroke-linejoin="round" stroke-linecap="round" />
<path d="M13 305 V327.5 H25.5 M15.5 323.5 V311 H17.7 V323.5 M19.5 323.5 V316 H21.3 V323.5 M23 323.5 V308 H25 V323.5" fill="none" stroke="#252423" stroke-width="1.3" stroke-linejoin="round" stroke-linecap="round" />
<path d="M13 328.3 H25.7" fill="none" stroke="#252423" stroke-width="1.6" stroke-linejoin="round" stroke-linecap="round" />
<path d="M12.5 373.5 H26.5 V399.5 H12.5 Z M12.5 380.5 H26.5 M12.5 387 H26.5 M12.5 393.5 H26.5 M17.2 380.5 V399.5 M21.9 380.5 V399.5" fill="none" stroke="#6b6967" stroke-width="1.3" stroke-linejoin="round" stroke-linecap="round" />
<rect x="12.5" y="373.5" width="14" height="7" fill="#bab8b6"/>
<path d="M21 442.5 H27.5 V453.5 H21 Z M21 461 H27.5 V472 H21 Z M11.5 452.5 H18 V463.5 H11.5 Z M18 456 H21 V448 M15 463.5 V467 H21" fill="none" stroke="#6b6967" stroke-width="1.3" stroke-linejoin="round" stroke-linecap="round" />
<path d="M718.7 330.2 H733.2 L727.5 342.5 V352.8 Q726 354.6 724.7 352.8 V342.5 Z" fill="none" stroke="#5f5e5c" stroke-width="1.3" stroke-linejoin="round" stroke-linecap="round" />
<path d="M753.3 329.8 L758.3 340 L752.5 351.6 L744.8 345.6 Z M748.2 339.5 L754.2 349.5" fill="none" stroke="#cfcac6" stroke-width="1.1" stroke-linejoin="round" stroke-linecap="round" />
<path d="M747.5 353.3 H755.5" fill="none" stroke="#e6dfae" stroke-width="1.2" stroke-linejoin="round" stroke-linecap="round" />
<ellipse cx="771.3" cy="342.2" rx="1.15" ry="1.9" fill="#5a5958"/>
<ellipse cx="777.1" cy="342.2" rx="1.15" ry="1.9" fill="#5a5958"/>
<ellipse cx="782.9" cy="342.2" rx="1.15" ry="1.9" fill="#5a5958"/>
<path d="M733.5 553.5 C733.5 550 736.2 550 736.2 553.5 V566 L737.2 562.5 C738 561 739.6 561.5 739.6 563.5 L740.4 563 C741.4 562 742.6 563 742.6 565 L743.2 565 C744.6 564.5 745.2 566 745.2 568 V577 C745 583 743.5 586 743 589 H735.5 C735 585 732 581 730.5 576 C729.5 573 731.5 571.5 733.5 575 Z" fill="#ffffff" stroke="#222222" stroke-width="1.2" stroke-linejoin="round" stroke-linecap="round" />
<path d="M845.5 308 L841.5 317 L845.5 326 M851 308 L847 317 L851 326" fill="none" stroke="#3b3a39" stroke-width="1.4" stroke-linejoin="round" stroke-linecap="round" />
<path d="M1013 308 L1017 317 L1013 326 M1018.5 308 L1022.5 317 L1018.5 326" fill="none" stroke="#3b3a39" stroke-width="1.4" stroke-linejoin="round" stroke-linecap="round" />
<path d="M1182.5 308 L1186.5 317 L1182.5 326 M1188 308 L1192 317 L1188 326" fill="none" stroke="#3b3a39" stroke-width="1.4" stroke-linejoin="round" stroke-linecap="round" />
<path d="M852.5 355.5 V374 L847 367.5 H843.5 V362 H847 Z" fill="none" stroke="#3b3a39" stroke-width="1.4" stroke-linejoin="round" stroke-linecap="round" />
<rect x="870" y="384" width="29" height="56" fill="#d6d4d2"/>
<rect x="873" y="390" width="18.5" height="3" fill="#4a4846"/>
<rect x="873" y="414.5" width="22.5" height="3" fill="#f6eef0"/>
<rect x="873.5" y="399" width="21.5" height="14.5" fill="#11806a" stroke="#0a3d33" stroke-width="1.6" stroke-dasharray="1.5 1.5"/>
<rect x="873.5" y="418" width="21.5" height="14.5" fill="#11806a" stroke="#0a3d33" stroke-width="1.6" stroke-dasharray="1.5 1.5"/>
<path d="M944.5 391.5 H936 V432 H939.5 M944.5 391.5 L951.5 404 H944.5 Z M951.5 404 V408" fill="none" stroke="#3b3a39" stroke-width="1.6" stroke-linejoin="round" stroke-linecap="round" />
<path d="M957 405.5 C955.5 412 952 420 949 425 L946.5 423 C949 416 953 409 957 405.5 Z M946.5 424 C945 428 944 430.5 941.5 432 C943.5 433.5 947.5 431.5 949 426" fill="none" stroke="#3b3a39" stroke-width="1.4" stroke-linejoin="round" stroke-linecap="round" />
<ellipse cx="1051.5" cy="381" rx="4" ry="7" fill="none" stroke="#605e5c" stroke-width="1.4" />
<path d="M1049 387.5 L1044 396.5" fill="none" stroke="#605e5c" stroke-width="1.5" stroke-linejoin="round" stroke-linecap="round" />
<path d="M1042 438 L1046.5 446 L1042 454" fill="none" stroke="#605e5c" stroke-width="1.3" stroke-linejoin="round" stroke-linecap="round" />
<path d="M1055 436.5 H1063.5 Q1064.5 436.5 1064.5 438 V454 Q1064.5 455.5 1063.5 455.5 H1055 Q1054 455.5 1054 454 V438 Q1054 436.5 1055 436.5 Z M1054 442.5 H1064.5 M1054 449.5 H1064.5 M1057.5 436.5 V455.5 M1061 436.5 V455.5" fill="none" stroke="#323130" stroke-width="1.3" stroke-linejoin="round" stroke-linecap="round" />
<path d="M1042 481 L1046.5 489 L1042 497" fill="none" stroke="#605e5c" stroke-width="1.3" stroke-linejoin="round" stroke-linecap="round" />
<path d="M1055 479.5 H1063.5 Q1064.5 479.5 1064.5 481 V497 Q1064.5 498.5 1063.5 498.5 H1055 Q1054 498.5 1054 497 V481 Q1054 479.5 1055 479.5 Z M1054 485.5 H1064.5 M1054 492.5 H1064.5 M1057.5 479.5 V498.5 M1061 479.5 V498.5" fill="none" stroke="#323130" stroke-width="1.3" stroke-linejoin="round" stroke-linecap="round" />
<path d="M49.5 1109.5 H66.5 V1127 H49.5 Z M58 1127 V1131.5 M54.5 1132 H61.5" fill="none" stroke="#605e5c" stroke-width="1.5" stroke-linejoin="round" stroke-linecap="round" />
<rect x="47.5" y="1144.5" width="22.5" height="5.5" fill="#117865"/>
<rect x="94.8" y="1104.5" width="10.6" height="33" rx="1.5" fill="none" stroke="#605e5c" stroke-width="1.5"/>
<ellipse cx="100" cy="1132.5" rx="0.9" ry="1.3" fill="#605e5c"/>
<path d="M131 1121 L126.5 1127.5 L131 1134 Z M145.5 1121 L150 1127.5 L145.5 1134 Z" fill="#d2d0ce"/>
<path d="M441 1119.5 V1136.5 M435.2 1128 H446.8" fill="none" stroke="#ffffff" stroke-width="2.9" stroke-linejoin="round" stroke-linecap="round" stroke-linecap="butt"/>
<rect x="1168" y="1170.5" width="15.5" height="20.5" rx="1.5" fill="none" stroke="#605e5c" stroke-width="1.4"/>
<path d="M1171 1179 V1175 H1173.6 M1178 1175 H1180.6 V1179 M1180.6 1183 V1187 H1178 M1173.6 1187 H1171 V1183" fill="none" stroke="#605e5c" stroke-width="1.3" stroke-linejoin="round" stroke-linecap="round" />
<g transform="translate(872 482.6)" stroke-linejoin="round"><rect x="1" y="3" width="10" height="8.5" fill="#69adf0" stroke="#2f7fd0" stroke-width="1.2" /><rect x="5" y="5" width="5" height="4.5" fill="#fbfbfb" stroke="none" stroke-width="1.2" /><rect x="1" y="17" width="13.5" height="9" fill="#d6d4d2" stroke="#3b3a39" stroke-width="1.2" /><rect x="1" y="17" width="4" height="9" fill="#fbfbfb" stroke="#3b3a39" stroke-width="1.2" /><path d="M0.7 0 V31.3 H17" stroke="#3b3a39" fill="none" stroke-width="1.5" /></g>
<g transform="translate(898.2 482.6)" stroke-linejoin="round"><rect x="3.5" y="9" width="4" height="22" fill="#69adf0" stroke="#2f7fd0" stroke-width="1.2" /><rect x="3.5" y="19" width="4" height="12" fill="#fbfbfb" stroke="#3b3a39" stroke-width="1.2" /><rect x="10.5" y="3" width="4" height="28" fill="#d6d4d2" stroke="#3b3a39" stroke-width="1.2" /><rect x="10.5" y="14" width="4" height="17" fill="#fbfbfb" stroke="#3b3a39" stroke-width="1.2" /><path d="M0.7 0 V31.3 H17" stroke="#3b3a39" fill="none" stroke-width="1.5" /></g>
<g transform="translate(924.4 482.6)" stroke-linejoin="round"><rect x="1" y="1" width="15" height="7" fill="#69adf0" stroke="#2f7fd0" stroke-width="1.2" /><rect x="1" y="8.5" width="8.5" height="5.5" fill="#fbfbfb" stroke="#3b3a39" stroke-width="1.2" /><rect x="1" y="15" width="7.5" height="6" fill="#d6d4d2" stroke="#3b3a39" stroke-width="1.2" /><rect x="1" y="22" width="11" height="6.5" fill="#fbfbfb" stroke="#3b3a39" stroke-width="1.2" /><path d="M0.7 0 V31.3 H17" stroke="#3b3a39" fill="none" stroke-width="1.5" /></g>
<g transform="translate(950.8 482.6)" stroke-linejoin="round"><rect x="1" y="1" width="4" height="30" fill="#69adf0" stroke="#2f7fd0" stroke-width="1.2" /><rect x="6" y="12" width="3.5" height="19" fill="#d6d4d2" stroke="#3b3a39" stroke-width="1.2" /><rect x="10.5" y="8" width="4.5" height="23" fill="#fbfbfb" stroke="#3b3a39" stroke-width="1.2" /><path d="M0.7 0 V31.3 H17" stroke="#3b3a39" fill="none" stroke-width="1.5" /></g>
<g transform="translate(977 482.6)" stroke-linejoin="round"><rect x="1" y="3" width="15" height="8.5" fill="#fbfbfb" stroke="#3b3a39" stroke-width="1.2" /><rect x="1" y="3" width="11" height="8.5" fill="#69adf0" stroke="#2f7fd0" stroke-width="1.2" /><rect x="1" y="17" width="15" height="9" fill="#fbfbfb" stroke="#3b3a39" stroke-width="1.2" /><rect x="6" y="17" width="10" height="9" fill="#d6d4d2" stroke="#3b3a39" stroke-width="1.2" /><path d="M0.7 0 V31.3 H17" stroke="#3b3a39" fill="none" stroke-width="1.5" /></g>
<g transform="translate(1003.2 482.6)" stroke-linejoin="round"><rect x="3.5" y="3" width="4" height="28" fill="#69adf0" stroke="#2f7fd0" stroke-width="1.2" /><rect x="3.5" y="20" width="4" height="11" fill="#fbfbfb" stroke="#3b3a39" stroke-width="1.2" /><rect x="10.5" y="3" width="4" height="28" fill="#fbfbfb" stroke="#3b3a39" stroke-width="1.2" /><rect x="10.5" y="3" width="4" height="11" fill="#d6d4d2" stroke="#3b3a39" stroke-width="1.2" /><path d="M0.7 0 V31.3 H17" stroke="#3b3a39" fill="none" stroke-width="1.5" /></g>
<g transform="translate(872 532)" stroke-linejoin="round"><path d="M1 24 L8 8 L11 14 L15 5" stroke="#2f7fd0" fill="none" stroke-width="1.3" /><path d="M1 17 L6 9 L10 16 L15 6" stroke="#3b3a39" fill="none" stroke-width="1.3" /><path d="M0.7 0 V31.3 H17" stroke="#3b3a39" fill="none" stroke-width="1.5" /></g>
<g transform="translate(898.2 532)" stroke-linejoin="round"><path d="M0.7 31.3 V22 L5.5 3 L9.5 14 L12.5 2 L16.5 14 V31.3 Z" stroke="#3b3a39" fill="#fbfbfb" stroke-width="1.2" /><path d="M9.5 14 L12.5 2 L16.5 14 V31.3 H9.5 Z" stroke="#3b3a39" fill="#d6d4d2" stroke-width="1.2" /><path d="M0.7 31.3 V21 L4 26 L8.5 14 L16.5 31.3 Z" stroke="#2f7fd0" fill="#69adf0" stroke-width="1.3" /></g>
<g transform="translate(924.4 532)" stroke-linejoin="round"><path d="M1 3 L7 15 L12 5 L16 10 V21 L12 13 L7 25 L1 12 Z" stroke="#2f7fd0" fill="#69adf0" stroke-width="1.3" /><path d="M0.7 0 V31.3 H17" stroke="#3b3a39" fill="none" stroke-width="1.5" /></g>
<g transform="translate(950.8 532)" stroke-linejoin="round"><rect x="3.5" y="5" width="4" height="26" fill="#69adf0" stroke="#2f7fd0" stroke-width="1.2" /><rect x="3.5" y="18" width="4" height="13" fill="#fbfbfb" stroke="#3b3a39" stroke-width="1.2" /><rect x="10.5" y="5" width="4" height="26" fill="#d6d4d2" stroke="#3b3a39" stroke-width="1.2" /><rect x="10.5" y="15" width="4" height="16" fill="#fbfbfb" stroke="#3b3a39" stroke-width="1.2" /><path d="M1 25 L5.5 16 L9 24 L15.5 10" stroke="#3b3a39" fill="none" stroke-width="1.3" /><path d="M0.7 0 V31.3 H17" stroke="#3b3a39" fill="none" stroke-width="1.5" /></g>
<g transform="translate(977 532)" stroke-linejoin="round"><rect x="3" y="14" width="3.5" height="17" fill="#69adf0" stroke="#2f7fd0" stroke-width="1.2" /><rect x="7" y="3" width="4" height="28" fill="#fbfbfb" stroke="#3b3a39" stroke-width="1.2" /><rect x="11.5" y="10" width="3.5" height="21" fill="#d6d4d2" stroke="#3b3a39" stroke-width="1.2" /><path d="M1 27 L5 15 L9 24 L15.5 9" stroke="#3b3a39" fill="none" stroke-width="1.3" /><path d="M0.7 0 V31.3 H17" stroke="#3b3a39" fill="none" stroke-width="1.5" /></g>
<g transform="translate(1003.2 532)" stroke-linejoin="round"><path d="M2 4 L8.5 13 L16 4 V14 L8.5 22 L2 14 Z" stroke="#8a8886" fill="#b3b0ad" stroke-width="1.2" /><path d="M2 14 C6 13 6 26 9 25 C12 24 12 12 16 13 V19 C12 18 12 29 9 28 C6 28 5 20 2 20 Z" stroke="#2f7fd0" fill="#69adf0" stroke-width="1.2" /><ellipse cx="2.5" cy="24" rx="1.6" ry="2.6" fill="#f0a030"/><ellipse cx="8.5" cy="17.5" rx="1.6" ry="2.6" fill="#f0a030"/><ellipse cx="15" cy="23" rx="1.6" ry="2.6" fill="#f0a030"/><path d="M0.7 0 V31.3 H17" stroke="#3b3a39" fill="none" stroke-width="1.5" /></g>
<g transform="translate(872 581.3)" stroke-linejoin="round"><rect x="1.5" y="10" width="4" height="21" fill="#fbfbfb" stroke="#3b3a39" stroke-width="1.2" /><rect x="5.5" y="10" width="4.5" height="13" fill="none" stroke="#3b3a39" stroke-width="1.2" /><rect x="10" y="2" width="5" height="29" fill="#fbfbfb" stroke="#3b3a39" stroke-width="1.2" /><path d="M5.5 23 H10" stroke="#3b3a39" fill="none" stroke-width="1.3" /><path d="M0.7 0 V31.3 H17" stroke="#3b3a39" fill="none" stroke-width="1.5" /></g>
<g transform="translate(898.2 581.3)" stroke-linejoin="round"><rect x="0.5" y="1.5" width="16" height="7" fill="#69adf0" stroke="#2f7fd0" stroke-width="1.2" /><rect x="2.5" y="9.5" width="12" height="7" fill="#69adf0" stroke="#2f7fd0" stroke-width="1.2" /><rect x="4.5" y="17.5" width="8" height="7" fill="#69adf0" stroke="#2f7fd0" stroke-width="1.2" /><rect x="6" y="25.5" width="5" height="6" fill="#69adf0" stroke="#2f7fd0" stroke-width="1.2" /></g>
<g transform="translate(924.4 581.3)" stroke-linejoin="round"><rect x="13" y="4" width="3" height="5" fill="#252423" stroke="none" stroke-width="1.2" /><rect x="4" y="9" width="3" height="5" fill="#b3b0ad" stroke="none" stroke-width="1.2" /><rect x="8.5" y="14" width="3" height="5" fill="#9fb9d6" stroke="none" stroke-width="1.2" /><rect x="4" y="21" width="3" height="5" fill="#252423" stroke="none" stroke-width="1.2" /><rect x="13" y="22" width="3" height="5" fill="#9fb9d6" stroke="none" stroke-width="1.2" /><path d="M0.7 0 V31.3 H17" stroke="#3b3a39" fill="none" stroke-width="1.5" /></g>
<g transform="translate(950.8 581.3)" stroke-linejoin="round"><ellipse cx="8.5" cy="16.5" rx="8" ry="15" fill="#fbfbfb" stroke="#3b3a39" stroke-width="1.4"/><path d="M8.5 1.5 C13 1.5 16.5 8 16.5 16.5 C16.5 21 15.5 25 14 28 L8.5 16.5 Z" stroke="#2f7fd0" fill="#69adf0" stroke-width="1.2" /></g>
<g transform="translate(977 581.3)" stroke-linejoin="round"><ellipse cx="8.5" cy="16.5" rx="6" ry="11.3" fill="none" stroke="#2f7fd0" stroke-width="5.3"/><ellipse cx="8.5" cy="16.5" rx="6" ry="11.3" fill="none" stroke="#69adf0" stroke-width="3.3"/><path d="M8.5 2.5 V9 M2 22 L5.5 19.5" stroke="#f3f2f1" fill="none" stroke-width="1.3" /></g>
<g transform="translate(1003.2 581.3)" stroke-linejoin="round"><rect x="0.7" y="1" width="15.6" height="30" fill="#fbfbfb" stroke="#3b3a39" stroke-width="1.4" /><rect x="0.7" y="1" width="8.3" height="17" fill="#69adf0" stroke="#2f7fd0" stroke-width="1.2" /><rect x="0.7" y="18" width="8.3" height="13" fill="#69adf0" stroke="#2f7fd0" stroke-width="1.2" /><path d="M9 10 H16.3 M9 18 H16.3 M12.5 18 V31" stroke="#3b3a39" fill="none" stroke-width="1.3" /></g>
<g transform="translate(872 630.6)" stroke-linejoin="round"><ellipse cx="8" cy="14" rx="5.8" ry="11.5" fill="#fbfbfb" stroke="#3b3a39" stroke-width="1.4"/><ellipse cx="8.8" cy="9.5" rx="2.2" ry="3.4" fill="#2f8f4e"/><ellipse cx="8" cy="19" rx="1.8" ry="3" fill="#2f8f4e"/><path d="M3 4 C0.5 9 0.5 20 4 26" stroke="#3b3a39" fill="none" stroke-width="1.4" /><path d="M8 26 V30.5 M3.5 31 H12.5" stroke="#3b3a39" fill="none" stroke-width="1.5" /></g>
<g transform="translate(898.2 630.6)" stroke-linejoin="round"><path d="M1 3 L4 4.5 L7 2.5 L10.5 5 L16 2.5 V15 C16 21 13 24 11.5 27 L9 25 L7.5 29.5 L4.5 26 C3 22 0.5 17 1.5 11 Z" stroke="#3b3a39" fill="#69adf0" stroke-width="1.3" /><path d="M7 2.5 V12 H16 M7 12 V17 H1.5 M10 17 V25" stroke="#3b3a39" fill="none" stroke-width="1" /><path d="M7 12 H16 V17 H7 Z" stroke="#3b3a39" fill="#d6d4d2" stroke-width="1" /><path d="M2 11 L7 12 V17 H1.5" stroke="#3b3a39" fill="#fbfbfb" stroke-width="1" /></g>
<g transform="translate(924.4 630.6)" stroke-linejoin="round"><path d="M8.5 0 L16 31 L8.5 23 L1 31 Z" stroke="#1b6fc0" fill="#2f8fe0" stroke-width="1" /><path d="M8.5 0 L8.5 23 L1 31 Z" stroke="none" fill="#7cc0f5" stroke-width="0" /></g>
<g transform="translate(950.8 630.6)" stroke-linejoin="round"><path d="M1 23 C1 3 16 3 16 23 H12.5 C12.5 11 4.5 11 4.5 23 Z" stroke="#2f7fd0" fill="#69adf0" stroke-width="1.2" /><path d="M1 23 C1 12 4 8 8 8 L8.5 14 C6 14 4.5 17 4.5 23 Z" stroke="#3b3a39" fill="#fbfbfb" stroke-width="1.2" /><path d="M9 23 L12 15" stroke="#3b3a39" fill="none" stroke-width="1.8" /></g>
<g transform="translate(977 630.6)" stroke-linejoin="round"><rect x="0.8" y="5" width="15.4" height="25" fill="#fbfbfb" stroke="#3b3a39" stroke-width="1.5" /><rect x="2.5" y="20.5" width="12" height="2.6" fill="#b3b0ad" stroke="none" stroke-width="1.2" /><rect x="2.5" y="24.5" width="12" height="2" fill="#69adf0" stroke="none" stroke-width="1.2" /><text x="2.2" y="18.5" font-size="12" textLength="12.6" lengthAdjust="spacingAndGlyphs" fill="#2f7fd0" stroke="none">123</text></g>
<g transform="translate(1003.2 630.6)" stroke-linejoin="round"><rect x="0.8" y="1" width="15.4" height="30" fill="#fbfbfb" stroke="#3b3a39" stroke-width="1.5" /><rect x="4" y="7.5" width="9" height="2.8" fill="#2f7fd0" stroke="none" stroke-width="1.2" /><rect x="4" y="12" width="4.5" height="1.8" fill="#b3b0ad" stroke="none" stroke-width="1.2" /><rect x="4" y="18.5" width="9" height="2.8" fill="#2f7fd0" stroke="none" stroke-width="1.2" /><rect x="4" y="23" width="4.5" height="1.8" fill="#b3b0ad" stroke="none" stroke-width="1.2" /></g>
<g transform="translate(872 680)" stroke-linejoin="round"><rect x="0.8" y="3.5" width="15.4" height="24" fill="#fbfbfb" stroke="#3b3a39" stroke-width="1.5" /><path d="M3 17 L5.5 8 L8 17 Z" stroke="#2f8f4e" fill="none" stroke-width="1.2" /><path d="M9.5 8 L14.5 8 L12 17 Z" stroke="#d13438" fill="#e8505a" stroke-width="1" /><rect x="3" y="20.5" width="11" height="2" fill="#2f8f4e" stroke="none" stroke-width="1.2" /></g>
<g transform="translate(898.2 680)" stroke-linejoin="round"><rect x="0.8" y="1" width="14.5" height="29" fill="#fbfbfb" stroke="#3b3a39" stroke-width="1.5" /><path d="M0.8 6 H15.3" stroke="#3b3a39" fill="none" stroke-width="1.3" /><rect x="3.2" y="11" width="2" height="3" fill="none" stroke="#3b3a39" stroke-width="1" /><rect x="3.2" y="16" width="2" height="3" fill="none" stroke="#3b3a39" stroke-width="1" /><rect x="3.2" y="21" width="2" height="3" fill="none" stroke="#3b3a39" stroke-width="1" /><path d="M8.5 17.5 H17 L14 23 V31.5 H11.5 V23 Z" stroke="#3b3a39" fill="#fbfbfb" stroke-width="1.3" /></g>
<g transform="translate(924.4 680)" stroke-linejoin="round"><rect x="0.8" y="1" width="15.4" height="30" fill="#fbfbfb" stroke="#3b3a39" stroke-width="1.5" /><rect x="0.8" y="1" width="15.4" height="5" fill="#b3b0ad" stroke="#3b3a39" stroke-width="1.2" /><path d="M0.8 12.5 H16.2 M0.8 18.5 H16.2 M0.8 24.5 H16.2 M6 6 V31 M11 6 V31" stroke="#3b3a39" fill="none" stroke-width="1.1" /></g>
<g transform="translate(950.8 680)" stroke-linejoin="round"><rect x="0.8" y="1" width="15.4" height="30" fill="#fbfbfb" stroke="#3b3a39" stroke-width="1.5" /><rect x="0.8" y="1" width="15.4" height="5" fill="#b3b0ad" stroke="#3b3a39" stroke-width="1.2" /><rect x="11" y="6" width="5.2" height="25" fill="#69adf0" stroke="none" stroke-width="1.2" /><rect x="0.8" y="24.5" width="15.4" height="6.5" fill="#69adf0" stroke="none" stroke-width="1.2" /><path d="M0.8 12.5 H16.2 M0.8 18.5 H16.2 M0.8 24.5 H16.2 M6 6 V31 M11 6 V31" stroke="#3b3a39" fill="none" stroke-width="1.1" /><rect x="0.8" y="1" width="15.4" height="30" fill="none" stroke="#2f7fd0" stroke-width="0" /></g>
<g transform="translate(977 680)" stroke-linejoin="round"><text x="3.5" y="26.4" font-size="27" font-weight="700" textLength="9.5" lengthAdjust="spacingAndGlyphs" fill="#2a7ab8">R</text></g>
<g transform="translate(1003.2 680)" stroke-linejoin="round"><text x="-0.3" y="24" font-size="31" font-weight="700" textLength="18" lengthAdjust="spacingAndGlyphs" fill="#2a7ab8">Py</text></g>
<g transform="translate(872 729.3)" stroke-linejoin="round"><path d="M1.5 6.5 H11 M1.5 16 H8.5 M1.5 22 H7 M1.5 26 H5" stroke="#b3b0ad" fill="none" stroke-width="1.6" /><ellipse cx="13.5" cy="6.5" rx="2" ry="3.2" fill="#9fc8f2" stroke="#2f7fd0" stroke-width="1.1"/><path d="M8 13.5 L10.5 16 L8 18.5 M6.5 19.5 L9 22 L6.5 24.5" stroke="#3b3a39" fill="none" stroke-width="1.1" /><path d="M0.7 0 V31.3 H17" stroke="#3b3a39" fill="none" stroke-width="1.5" /></g>
<g transform="translate(898.2 729.3)" stroke-linejoin="round"><rect x="0.5" y="13" width="5" height="8" fill="#69adf0" stroke="#2f7fd0" stroke-width="1.2" /><rect x="10" y="1" width="6" height="8" fill="#69adf0" stroke="#2f7fd0" stroke-width="1.2" /><rect x="10" y="12.5" width="6" height="8" fill="#69adf0" stroke="#2f7fd0" stroke-width="1.2" /><rect x="10" y="24" width="6" height="8" fill="#69adf0" stroke="#2f7fd0" stroke-width="1.2" /><path d="M5.5 17 H10 M8 5 V28 M8 5 H10 M8 28 H10" stroke="#2f7fd0" fill="none" stroke-width="1.2" /></g>
<g transform="translate(924.4 729.3)" stroke-linejoin="round"><path d="M0.8 3 H16.2 V22.5 H8 L4 30 V22.5 H0.8 Z" stroke="#2f7fd0" fill="#fbfbfb" stroke-width="1.5" /></g>
<g transform="translate(950.8 729.3)" stroke-linejoin="round"><path d="M2.5 1 H11.5 L16 8 V31 H2.5 Z M11.5 1 V8 H16" stroke="#3b3a39" fill="#fbfbfb" stroke-width="1.4" /><ellipse cx="3" cy="11.5" rx="1.8" ry="2.8" fill="#cfe4f8" stroke="#2f7fd0" stroke-width="1.1"/><rect x="6.5" y="14" width="6" height="1.8" fill="#2f7fd0" stroke="none" stroke-width="1.2" /><rect x="6.5" y="20" width="6" height="1.8" fill="#2f7fd0" stroke="none" stroke-width="1.2" /></g>
<g transform="translate(977 729.3)" stroke-linejoin="round"><path d="M3.5 2.5 H13.5 V10 C13.5 20 3.5 20 3.5 10 Z" stroke="#3b3a39" fill="#fbfbfb" stroke-width="1.4" /><rect x="3.5" y="1" width="10" height="3.5" fill="#69adf0" stroke="#2f7fd0" stroke-width="1.2" /><path d="M3.5 5 H1 V8 C1 12 2.5 14 4.5 14.5 M13.5 5 H16 V8 C16 12 14.5 14 12.5 14.5 M8.5 18 V24" stroke="#3b3a39" fill="none" stroke-width="1.3" /><path d="M6 24.5 H11 L13 30.5 H4 Z" stroke="#2f7fd0" fill="#69adf0" stroke-width="1.2" /></g>
<g transform="translate(1003.2 729.3)" stroke-linejoin="round"><path d="M1.5 1 H10.5 L15.5 8.5 V31 H1.5 Z M10.5 1 V8.5 H15.5" stroke="#3b3a39" fill="#fbfbfb" stroke-width="1.5" /><rect x="4" y="19" width="1.7" height="8" fill="#252423" stroke="none" stroke-width="1.2" /><rect x="7.5" y="22" width="1.7" height="5" fill="#252423" stroke="none" stroke-width="1.2" /><rect x="11" y="15" width="1.7" height="12" fill="#252423" stroke="none" stroke-width="1.2" /></g>
<g transform="translate(872 778.5)" stroke-linejoin="round"><rect x="2.5" y="6" width="13.5" height="25" fill="#fbfbfb" stroke="#3b3a39" stroke-width="1.5" /><rect x="4" y="23" width="10.5" height="2.6" fill="#b3b0ad" stroke="none" stroke-width="1.2" /><rect x="4" y="26.5" width="10.5" height="1.8" fill="#69adf0" stroke="none" stroke-width="1.2" /><text x="4.5" y="20" font-size="12" textLength="10.5" lengthAdjust="spacingAndGlyphs" fill="#2f7fd0">123</text><path d="M2.5 0 H7 L4.5 9 H7.5 L0.5 24 L2.5 12.5 H-0.5 Z" stroke="#e08a1e" fill="#f7b64a" stroke-width="0.9" /></g>
<g transform="translate(898.2 778.5)" stroke-linejoin="round"><rect x="1.5" y="2.5" width="14" height="28" fill="#fbfbfb" stroke="#3b3a39" stroke-width="1.5" /><path d="M9 6 H15.5 M9 9.5 H15.5" stroke="#3b3a39" fill="none" stroke-width="1.3" /><rect x="3.5" y="20" width="2" height="3" fill="none" stroke="#3b3a39" stroke-width="1" /><path d="M8.5 18 H17 L14 23.5 V32 H11.5 V23.5 Z" stroke="#3b3a39" fill="#fbfbfb" stroke-width="1.3" /><path d="M2.5 0 H7 L4.5 9 H7.5 L0.5 24 L2.5 12.5 H-0.5 Z" stroke="#e08a1e" fill="#f7b64a" stroke-width="0.9" /></g>
<g transform="translate(924.4 778.5)" stroke-linejoin="round"><rect x="1" y="2.5" width="15" height="28" fill="#2f7fd0" stroke="#2f7fd0" stroke-width="1.2" /><path d="M5 30 C6 22 8 18 10.5 14 C12 11 13 8 13 3 L16 3 V12 C13 16 11 22 11 30 Z" stroke="none" fill="#cfe6fa" stroke-width="0" /><ellipse cx="14.5" cy="22" rx="2.4" ry="3.8" fill="#e2711d"/><ellipse cx="13.5" cy="29.5" rx="2.2" ry="3.2" fill="#e2711d"/><path d="M0.5 1 H5.5 V8 L3 13 L0.5 8 Z" stroke="#e2711d" fill="#e2711d" stroke-width="0.8" /><ellipse cx="3" cy="5.5" rx="0.9" ry="1.5" fill="#ffffff"/></g>
<g transform="translate(950.8 778.5)" stroke-linejoin="round"><path d="M8.5 2.5 L16 16.5 L8.5 30.5 L1 16.5 Z M4.8 9.5 L12.2 23.5 M12.2 9.5 L4.8 23.5" stroke="#8a4fb3" fill="#fbeffc" stroke-width="1.2" /></g>
<g transform="translate(977 778.5)" stroke-linejoin="round"><path d="M1 3.5 H9 L16 16.5 L9 29.5 H1 L8 16.5 Z" stroke="#2f7fd0" fill="#d6eafb" stroke-width="1.5" /><path d="M9 9 L2.5 21 M12.5 14 L5 28" stroke="#2f7fd0" fill="none" stroke-width="1.2" /></g>
<ellipse cx="1005.5" cy="792" rx="1" ry="1.6" fill="#3b3a39"/><ellipse cx="1011.5" cy="792" rx="1" ry="1.6" fill="#3b3a39"/><ellipse cx="1017.5" cy="792" rx="1" ry="1.6" fill="#3b3a39"/>
<rect x="870" y="834" width="24" height="38" fill="#f7f7f7"/>
<g transform="translate(872 836)"><rect x="1" y="17" width="9" height="3" fill="#c5daf2" stroke="none" stroke-width="1.2" /><rect x="1" y="22" width="9" height="3" fill="#a9cbf0" stroke="none" stroke-width="1.2" /><rect x="1" y="27.5" width="15" height="2.5" fill="#c5daf2" stroke="none" stroke-width="1.2" /><path d="M3 0.5 C6.5 0.5 6.5 7 3 15 C-0.5 7 -0.5 0.5 3 0.5 Z" stroke="#f09a50" fill="#f7b580" stroke-width="1" /><ellipse cx="3" cy="5" rx="1" ry="1.7" fill="#fff"/><path d="M13 10.5 C16.5 10.5 16.5 17 13 26 C9.5 17 9.5 10.5 13 10.5 Z" stroke="#f09a50" fill="#f7b580" stroke-width="1" /><ellipse cx="13" cy="15" rx="1" ry="1.7" fill="#fff"/></g>
</svg>
</body></html>
